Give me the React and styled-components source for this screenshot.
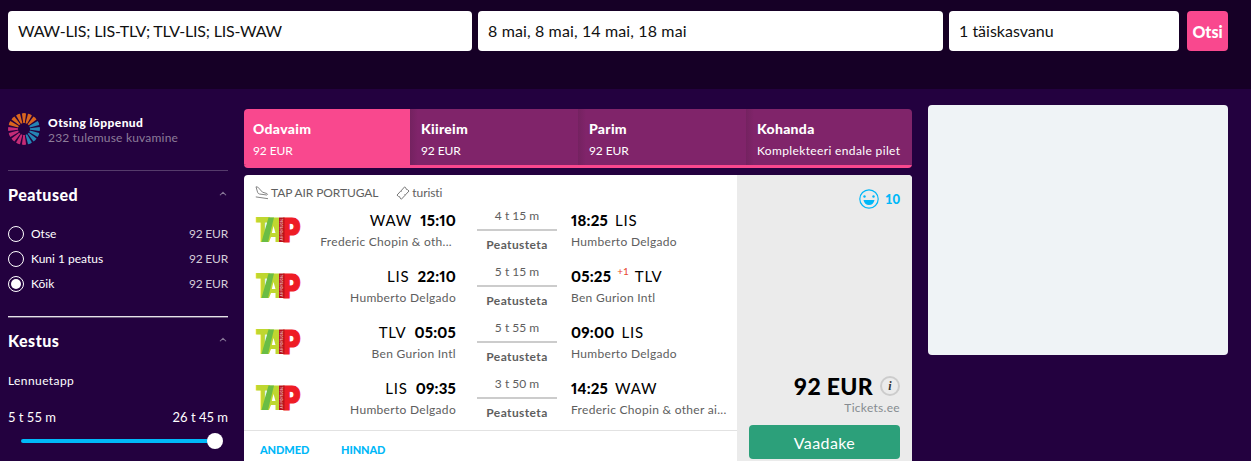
import { useState } from 'react';
import styled, { createGlobalStyle, ThemeProvider } from 'styled-components';

const theme = {
    colors: {
        top: "#160026",
        page: "#23013f",
        pink: "#f9488e",
        plum: "#80246a",
        blue: "#00b8f8",
        green: "#2ca07a",
        grey: "#5e5e5e",
    },
};

const TABS = [
    { title: "Odavaim", text: "92 EUR" },
    { title: "Kiireim", text: "92 EUR" },
    { title: "Parim", text: "92 EUR" },
    { title: "Kohanda", text: "Komplekteeri endale pilet", spacing: 0.36 },
];

const STOPS = [
    { label: "Otse", price: "92 EUR" },
    { label: "Kuni 1 peatus", price: "92 EUR" },
    { label: "Kõik", price: "92 EUR" },
];

const LEGS = [
    { from: "WAW", start: "15:10", fromName: "Frederic Chopin & oth...", time: "4 t 15 m", to: "LIS", end: "18:25", toName: "Humberto Delgado", cut: true },
    { from: "LIS", start: "22:10", fromName: "Humberto Delgado", time: "5 t 15 m", to: "TLV", end: "05:25", toName: "Ben Gurion Intl", plus: "+1" },
    { from: "TLV", start: "05:05", fromName: "Ben Gurion Intl", time: "5 t 55 m", to: "LIS", end: "09:00", toName: "Humberto Delgado" },
    { from: "LIS", start: "09:35", fromName: "Humberto Delgado", time: "3 t 50 m", to: "WAW", end: "14:25", toName: "Frederic Chopin & other ai..." },
];

const rayColor = (i) => {
    if (i >= 3 && i <= 7) return "#2585b5";
    if (i >= 8 && i <= 12) return "#c42c76";
    return "#d9661f";
};

function Spinner() {
    return (
        <svg width="32" height="32" viewBox="-16 -16 32 32">
            {Array.from({ length: 16 }, (_, i) => (
                <path key={i} d="M-0.8 -6 L-2.1 -15.6 Q0 -16.3 2.1 -15.6 L0.8 -6 Z" fill={rayColor(i)} transform={`rotate(${i * 22.5})`} />
            ))}
        </svg>
    );
}

function TapLogo() {
    return (
        <svg width="44" height="26" viewBox="0 0 44 26" overflow="visible" fontFamily="Inter" fontWeight="900" fontSize="34">
            <text x="-0.5" y="25" fill="#bfd730" textLength="15" lengthAdjust="spacingAndGlyphs">T</text>
            <path d="M12 0.5 H23 V25 H19.5 V20 H15 L13 25 H9 Z" fill="#bfd730" />
            <path d="M12.5 0.5 H18 L12 25 H5.5 Z" fill="#6abd45" />
            <path d="M17.5 9 L19.5 16 H15.8 Z" fill="#fff" />
            <text x="26.5" y="24.5" fill="#ee1c25" stroke="#ee1c25" strokeWidth="1.2" fontSize="32.5" textLength="18" lengthAdjust="spacingAndGlyphs">P</text>
            <rect x="23" y="0.5" width="5.5" height="24.5" fill="#b5121b" />
            <text x="-23.5" y="27.3" fill="#f3c9cb" fontSize="3.8" fontWeight="600" textLength="22" lengthAdjust="spacingAndGlyphs" transform="rotate(-90)">AIR PORTUGAL</text>
        </svg>
    );
}

function PlaneIcon() {
    return (
        <svg width="14" height="14" viewBox="0 0 14 14" fill="none" stroke="#777" strokeWidth="0.9" strokeLinejoin="round">
            <path d="M1 0.8 L2.8 1.1 L7.5 6.2 L11.8 7.5 Q13.2 8.6 11.8 9 L4.5 8 Q3 7.7 2.6 6.3 Z" />
            <path d="M0.8 10.9 L13 12.7" />
        </svg>
    );
}

function TicketIcon() {
    return (
        <svg width="14" height="14" viewBox="0 0 14 14" fill="none" stroke="#777" strokeWidth="1" strokeLinejoin="round">
            <path d="M8.6 0.9 L10 2.2 Q10 3.8 11.6 3.7 L13 5 L9.4 8.9 L8.7 8.7 L8.8 9.6 L5.4 13.2 L4 11.9 Q4 10.2 2.4 10.4 L1 9.1 L4.700 5.100 L5.600 5.200 L5.500 4.300 Z" />
        </svg>
    );
}

function SmileIcon() {
    return (
        <svg width="20" height="20" viewBox="0 0 20 20" fill="none">
            <circle cx="10" cy="10" r="9.2" stroke="#00b8f8" strokeWidth="1.2" />
            <circle cx="5.5" cy="7.5" r="1.2" fill="#00b8f8" />
            <circle cx="14.5" cy="7.5" r="1.2" fill="#00b8f8" />
            <path d="M4.5 11 H15.5 Q14.5 16 10 16 Q5.5 16 4.5 11 Z" fill="#00b8f8" />
        </svg>
    );
}

function Chevron() {
    return (
        <svg width="8" height="5" viewBox="0 0 8 5" fill="none" stroke="#887898" strokeWidth="1.1">
            <path d="M1 4.3 Q1.5 3.5 4 1.3 Q6.5 3.5 7 4.3" />
        </svg>
    );
}

function Leg({ leg }) {
    return (
        <LegRow>
            <LogoCell><TapLogo /></LogoCell>
            <Side $end>
                <Hour><Code>{leg.from}</Code><b>{leg.start}</b></Hour>
                <Airport $pad={leg.cut ? 4 : 0}>{leg.fromName}</Airport>
            </Side>
            <Middle>
                <span>{leg.time}</span>
                <Line />
                <Direct>Peatusteta</Direct>
            </Middle>
            <Side>
                <Hour $gap={leg.plus ? 6 : 7}>
                    <b>{leg.end}</b>
                    {leg.plus && <Plus>{leg.plus}</Plus>}
                    <Code>{leg.to}</Code>
                </Hour>
                <Airport>{leg.toName}</Airport>
            </Side>
        </LegRow>
    );
}

export default function App() {
    const [tab, setTab] = useState(0);
    const [stop, setStop] = useState(2);

    return (
        <ThemeProvider theme={theme}>
            <GlobalStyle />
            <SearchBar>
                <Field $width={464} $spacing={-0.2}>WAW-LIS; LIS-TLV; TLV-LIS; LIS-WAW</Field>
                <Field $width={465} $spacing={0.13}>8 mai, 8 mai, 14 mai, 18 mai</Field>
                <Field $width={230}>1 täiskasvanu</Field>
                <SearchButton>Otsi</SearchButton>
            </SearchBar>
            <Content>
                <Sidebar>
                    <Status>
                        <Spinner />
                        <div>
                            <StatusTitle>Otsing lõppenud</StatusTitle>
                            <StatusText>232 tulemuse kuvamine</StatusText>
                        </div>
                    </Status>
                    <Filter>
                        <FilterTitle>Peatused <Chevron /></FilterTitle>
                        <Options>
                            {STOPS.map((s, i) => (
                                <Option key={s.label} onClick={() => setStop(i)}>
                                    <Radio $checked={stop === i} />
                                    <span>{s.label}</span>
                                    <Price>{s.price}</Price>
                                </Option>
                            ))}
                        </Options>
                    </Filter>
                    <Filter $bright>
                        <FilterTitle>Kestus <Chevron /></FilterTitle>
                        <SliderLabel>Lennuetapp</SliderLabel>
                        <Range><span>5 t 55 m</span><span>26 t 45 m</span></Range>
                        <Slider><Track /><Thumb /></Slider>
                    </Filter>
                </Sidebar>
                <Results>
                    <Tabs>
                        {TABS.map((t, i) => (
                            <Tab key={t.title} $active={tab === i} onClick={() => setTab(i)}>
                                <TabTitle>{t.title}</TabTitle>
                                <TabText $spacing={t.spacing}>{t.text}</TabText>
                            </Tab>
                        ))}
                    </Tabs>
                    <Card>
                        <Flights>
                            <Carrier>
                                <PlaneIcon /><span>TAP AIR PORTUGAL</span>
                                <TicketIcon /><span>turisti</span>
                            </Carrier>
                            {LEGS.map((leg) => <Leg key={leg.start} leg={leg} />)}
                            <Links>
                                <Link $width={49}>ANDMED</Link>
                                <Link $width={46}>HINNAD</Link>
                            </Links>
                        </Flights>
                        <Offer>
                            <Score><SmileIcon />10</Score>
                            <Total>92 EUR <Info>i</Info></Total>
                            <Seller>Tickets.ee</Seller>
                            <ViewButton>Vaadake</ViewButton>
                        </Offer>
                    </Card>
                </Results>
                <Banner />
            </Content>
        </ThemeProvider>
    );
}

const GlobalStyle = createGlobalStyle`
    * {
        box-sizing: border-box;
    }

    body {
        margin: 0;
        height: 461px;
        overflow: hidden;
        background: ${theme.colors.page};
        color: #fff;
        font-family: Lato, "Liberation Sans", sans-serif;
        font-size: 12px;
        line-height: 16px;
        white-space: nowrap;
    }

    svg {
        display: block;
        flex: none;
    }

    button {
        border: 0;
        padding: 0;
        color: #fff;
        font-family: inherit;
    }
`

const SearchBar = styled.div`
    display: flex;
    gap: 6px;
    height: 89px;
    padding: 11px 8px;
    background: ${({ theme }) => theme.colors.top};
`

const Field = styled.div`
    width: ${({ $width }) => $width}px;
    height: 40px;
    padding-left: 10px;
    border-radius: 4px;
    background: #fff;
    color: #111;
    font-size: 16px;
    line-height: 40px;
    letter-spacing: ${({ $spacing = 0 }) => $spacing}px;
`

const SearchButton = styled.button`
    width: 41px;
    height: 40px;
    margin-left: 2px;
    border-radius: 4px;
    background: ${({ theme }) => theme.colors.pink};
    font-size: 16px;
    font-weight: 900;
`

const Content = styled.div`
    display: flex;
    align-items: flex-start;
    gap: 16px;
    padding: 16px 8px 0;
`

const Sidebar = styled.div`
    width: 220px;
    padding-top: 8px;
`

const Status = styled.div`
    display: flex;
    gap: 8px;
    height: 57px;
`

const StatusTitle = styled.div`
    padding-top: 2px;
    font-weight: 900;
    line-height: 15px;
    letter-spacing: 0.4px;
`

const StatusText = styled.div`
    color: #8c7c99;
    line-height: 15px;
    letter-spacing: 0.2px;
`

const Filter = styled.div`
    height: ${({ $bright }) => $bright ? 144 : 146}px;
    border-top: 1px solid ${({ $bright }) => $bright ? "#e6e2e9" : "#553b6b"};
    box-shadow: ${({ $bright }) => $bright ? "inset 0 1px #6c5a7c" : "none"};
`

const FilterTitle = styled.div`
    display: flex;
    align-items: center;
    justify-content: space-between;
    height: 48px;
    padding-right: 1px;
    font-size: 16px;
    font-weight: 900;
    letter-spacing: 0.5px;

    svg {
        margin-bottom: 4px;
    }
`

const Options = styled.div`
    padding-top: 2px;
`

const Option = styled.div`
    display: flex;
    align-items: center;
    gap: 7px;
    height: 25px;
`

const Radio = styled.span`
    width: 16px;
    height: 16px;
    border: 1px solid #fff;
    border-radius: 50%;
    padding: 2px;
    background: ${({ $checked }) => $checked ? "#fff" : "none"} content-box;
`

const Price = styled.span`
    margin-left: auto;
    color: #d3ccd9;
    letter-spacing: -0.2px;
`

const SliderLabel = styled.div`
    padding-top: 8px;
    letter-spacing: 0.4px;
`

const Range = styled.div`
    display: flex;
    justify-content: space-between;
    margin-top: 20px;
    font-size: 13px;
`

const Slider = styled.div`
    display: flex;
    align-items: center;
    height: 16px;
    margin-top: 8px;
    padding-left: 13px;
`

const Track = styled.div`
    width: 188px;
    height: 4px;
    border-radius: 2px;
    background: ${({ theme }) => theme.colors.blue};
`

const Thumb = styled.div`
    width: 16px;
    height: 16px;
    margin-left: -2px;
    border-radius: 50%;
    background: #fff;
`

const Results = styled.div`
    width: 668px;
    padding-top: 4px;
`

const Tabs = styled.div`
    display: grid;
    grid-template-columns: 166px 168px 168px 166px;
    height: 59px;
    border-bottom: 3px solid ${({ theme }) => theme.colors.pink};
    border-radius: 4px;
    overflow: hidden;
`

const Tab = styled.div`
    padding: 12px 0 0 11px;
    background: ${({ $active, theme }) => $active
        ? theme.colors.pink
        : `linear-gradient(90deg, #742260, ${theme.colors.plum} 8px)`};

    &:first-child {
        padding-left: 9px;
    }
`

const TabTitle = styled.div`
    font-size: 14px;
    font-weight: 900;
    line-height: 15px;
    letter-spacing: 0.3px;
`

const TabText = styled.div`
    margin-top: 7px;
    letter-spacing: ${({ $spacing = -0.1 }) => $spacing}px;
`

const Card = styled.div`
    display: flex;
    height: 300px;
    margin-top: 7px;
    border-radius: 4px;
    overflow: hidden;
    background: #fff;
    color: ${({ theme }) => theme.colors.grey};
`

const Flights = styled.div`
    width: 493px;
`

const Carrier = styled.div`
    display: flex;
    align-items: center;
    gap: 2px;
    height: 34px;
    padding: 2px 0 0 11px;
    letter-spacing: -0.1px;

    svg:nth-of-type(2) {
        margin-left: 16px;
    }
`

const LegRow = styled.div`
    display: flex;
    height: 56px;
`

const LogoCell = styled.div`
    width: 56px;
    padding: 8px 0 0 12px;
`

const Side = styled.div`
    display: flex;
    flex-direction: column;
    align-items: ${({ $end }) => $end ? "flex-end" : "flex-start"};
    width: ${({ $end }) => $end ? 156 : 164}px;
`

const Hour = styled.div`
    display: flex;
    gap: ${({ $gap = 8 }) => $gap}px;
    padding-top: 2px;
    color: #000;
    font-size: 15px;
    line-height: 18px;

    b {
        font-weight: 900;
        font-variant-numeric: proportional-nums;
        letter-spacing: 0.2px;
    }
`

const Code = styled.span`
    letter-spacing: 0.8px;
`

const Plus = styled.span`
    color: #e8472f;
    font-size: 10px;
    line-height: 9px;
`

const Airport = styled.div`
    padding: 5px ${({ $pad = 0 }) => $pad}px 0 0;
    font-size: 12px;
    letter-spacing: 0.3px;
`

const Middle = styled.div`
    display: flex;
    flex-direction: column;
    align-items: center;
    width: 80px;
    margin: -1px 14px 0 21px;
    line-height: 15px;
`

const Line = styled.div`
    width: 80px;
    height: 2px;
    margin: 6px 0;
    background: #ccc;
`

const Direct = styled.b`
    letter-spacing: 0.4px;
`

const Links = styled.div`
    display: flex;
    gap: 32px;
    margin-top: -3px;
    padding: 11px 16px;
    border-top: 1px solid #e2e2e2;
`

const Link = styled.a`
    width: ${({ $width }) => $width}px;
    color: ${({ theme }) => theme.colors.blue};
    font-size: 11px;
    font-weight: 900;
    letter-spacing: -0.1px;
`

const Offer = styled.div`
    display: flex;
    flex-direction: column;
    align-items: flex-end;
    width: 175px;
    padding: 14px 12px;
    background: #ebebeb;
`

const Score = styled.div`
    display: flex;
    align-items: center;
    gap: 6px;
    height: 20px;
    color: ${({ theme }) => theme.colors.blue};
    font-size: 13px;
    font-weight: 900;
`

const Total = styled.div`
    display: flex;
    align-items: center;
    gap: 7px;
    margin-top: 167px;
    color: #000;
    font-size: 23px;
    font-weight: 900;
    line-height: 20px;
    letter-spacing: 0.3px;
`

const Info = styled.span`
    width: 20px;
    height: 20px;
    border: 2px solid #ccc;
    border-radius: 50%;
    color: #333;
    font: italic bold 12px/16px "Liberation Serif", serif;
    text-align: center;
`

const Seller = styled.div`
    margin-top: 4px;
    color: #868b90;
    letter-spacing: 0.3px;
`

const ViewButton = styled.button`
    width: 151px;
    height: 34px;
    margin-top: 9px;
    flex: none;
    border-radius: 4px;
    background: ${({ theme }) => theme.colors.green};
    font-size: 16px;
    letter-spacing: 0.4px;
`

const Banner = styled.div`
    width: 300px;
    height: 250px;
    border-radius: 4px;
    background: #eff3f6;
`
